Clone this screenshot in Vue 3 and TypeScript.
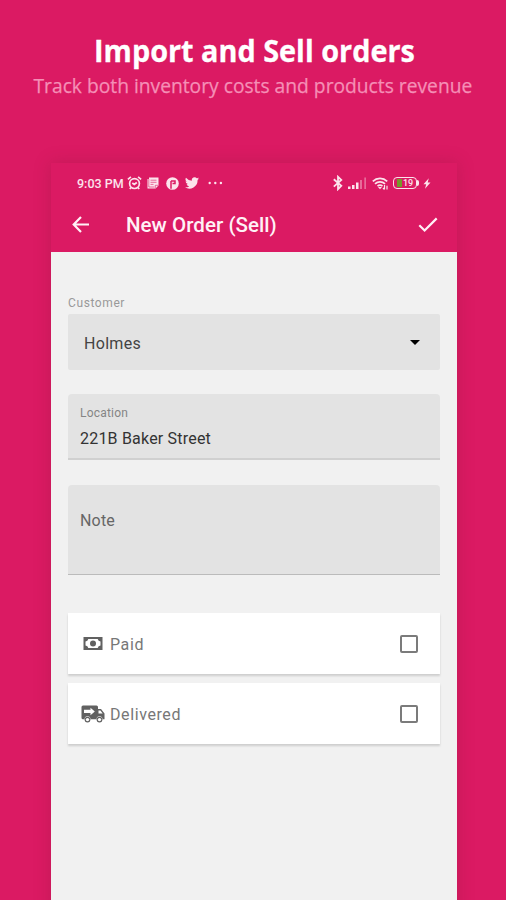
<script setup lang="ts">
import { ref } from 'vue'

const customer = ref('Holmes')
const location = ref('221B Baker Street')
const checks = ref([
  { id: 'paid', label: 'Paid', done: false },
  { id: 'delivered', label: 'Delivered', done: false },
])
</script>

<template>
  <main class="promo">
    <header class="headline">
      <h1><span>Import and Sell orders</span></h1>
      <p><span>Track both inventory costs and products revenue</span></p>
    </header>

    <section class="phone">
      <div class="status">
        <span class="time">9:03 PM</span>
        <svg class="alarm" width="15" height="14" viewBox="0 0 15 14" fill="none" stroke="currentColor" stroke-width="1.700">
          <circle cx="7.500" cy="7.600" r="4.900" />
          <path d="M.9 3.400 3.900.9M14.100 3.400 11.100.9M5.300 7l2 1.500 2.500-2M4 11.500 2.800 13M11 11.500l1.200 1.500" />
        </svg>
        <svg class="news" width="12" height="12" viewBox="0 0 12 12">
          <path fill="currentColor" d="M2 .5h9.500v8L8.500 11.500H.5V2H2z" />
          <path d="M3.500 3.200h6M3.500 5.300h6M3.500 7.400h3M1.800 2v8h5.500M8.300 11V8.300H11" fill="none" stroke="#db1a63" stroke-width=".6" />
        </svg>
        <svg class="badge" width="13" height="13" viewBox="0 0 13 13">
          <circle cx="6.500" cy="6.500" r="6.300" fill="currentColor" />
          <path d="M5 11.800V4M5 4h4v2.500H6.500" fill="none" stroke="#db1a63" stroke-width="1.500" />
        </svg>
        <svg class="bird" width="14" height="12" viewBox="0 0 24 20">
          <path fill="currentColor" d="M24 2.400a10 10 0 0 1-2.800.8A5 5 0 0 0 23.300.500a10 10 0 0 1-3.100 1.200 4.900 4.900 0 0 0-8.400 4.500A14 14 0 0 1 1.700 1a4.900 4.900 0 0 0 1.500 6.600A5 5 0 0 1 1 7a4.900 4.900 0 0 0 3.900 4.900 5 5 0 0 1-2.200.1 4.900 4.900 0 0 0 4.600 3.400A10 10 0 0 1 0 17.400 14 14 0 0 0 21.500 4.900 10 10 0 0 0 24 2.400z" />
        </svg>
        <svg class="dots" width="15" height="4" viewBox="0 0 15 4" fill="currentColor">
          <circle cx="1.700" cy="2" r="1.200" /><circle cx="7.300" cy="2" r="1.200" /><circle cx="12.900" cy="2" r="1.200" />
        </svg>
        <span class="space" />
        <svg class="bt" width="10" height="16" viewBox="0 0 10 16" fill="none" stroke="currentColor" stroke-width="1.800">
          <path d="m.8 4.300 7.500 6.600L5 14.200V1.800l3.300 3.100L.8 11.600" />
        </svg>
        <svg class="signal" width="19" height="12" viewBox="0 0 19 12" fill="currentColor">
          <path d="M0 9.500h2.500V12H0zM4 8h2.500v4H4zM8 5.500h2.500V12H8z" />
          <path d="M12 3h2v9h-2zM16.300.500h1.700V12h-1.700z" opacity=".4" />
        </svg>
        <svg class="wifi" width="17" height="13" viewBox="0 0 17 13" fill="none" stroke="currentColor" stroke-width="1.700">
          <path d="M.8 4.300a10.500 10.500 0 0 1 14.400 0M3 6.900a7.200 7.200 0 0 1 10 0M5.500 9.200a4 4 0 0 1 5 0" />
          <path d="m6 10 2 2.300L10 10z" fill="currentColor" stroke="none" />
          <path d="M12.500 8v4.300M11 11l1.500 1.500M15 12.500V8.800" stroke-width="1.200" />
        </svg>
        <span class="battery"><i class="level" /><b>19</b></span>
        <svg class="bolt" width="8" height="11" viewBox="0 0 8 11">
          <path fill="currentColor" d="M5.800.3.500 6.200h2.700L2 10.700l5.500-6.200H4.700z" />
        </svg>
      </div>

      <nav class="toolbar">
        <svg width="18" height="18" viewBox="0 0 18 18" fill="none" stroke="currentColor" stroke-width="2.200">
          <path d="M17 8.500H2M9 1 1.700 8.500 9 16" />
        </svg>
        <h2>New Order (Sell)</h2>
        <svg class="tick" width="20" height="16" viewBox="0 0 20 16" fill="none" stroke="currentColor" stroke-width="2.200">
          <path d="m1.300 8.200 5.300 5.300L18.700 1.400" />
        </svg>
      </nav>

      <div class="form">
        <span class="caption">Customer</span>
        <div class="select">
          <span>{{ customer }}</span>
          <svg width="10" height="5" viewBox="0 0 10 5"><path d="M0 0h10L5 5z" /></svg>
        </div>
        <div class="field">
          <span class="caption">Location</span>
          <span class="value">{{ location }}</span>
        </div>
        <div class="note">Note</div>

        <div v-for="item in checks" :key="item.id" class="card" @click="item.done = !item.done">
          <span class="icon">
            <svg v-if="item.id === 'paid'" width="20" height="13" viewBox="0 0 20 13">
              <path fill="#616161" fill-rule="evenodd" d="M.500 0h19v13H.500zM5.300 2A3.200 3.200 0 0 1 2.500 4.500v4A3.200 3.200 0 0 1 5.300 11h9.400a3.200 3.200 0 0 1 2.800-2.500v-4A3.200 3.200 0 0 1 14.700 2z" />
              <circle cx="10" cy="6.500" r="3" fill="#616161" />
            </svg>
            <svg v-else width="24" height="18" viewBox="0 0 24 18">
              <path fill="#616161" d="M2 .500h13.500A1.500 1.500 0 0 1 17 2v2h3l3.500 4.500v5.700h-2a3 3 0 0 0-6 0H9.500a3 3 0 0 0-6 0H2A1.500 1.500 0 0 1 .500 12.700V2A1.500 1.500 0 0 1 2 .500z" />
              <path fill="#fff" d="M3 4.800h6.500V2.800l4.300 3.700-4.300 3.700V7.900H3zM17.500 5.500h1.900l2.300 3h-4.200z" />
              <circle cx="6.500" cy="14.600" r="2.900" fill="#616161" /><circle cx="18.500" cy="14.600" r="2.900" fill="#616161" />
              <circle cx="6.500" cy="14.600" r="1.700" fill="#fff" /><circle cx="18.500" cy="14.600" r="1.700" fill="#fff" />
            </svg>
          </span>
          <span class="name">{{ item.label }}</span>
          <span class="box" :class="{ done: item.done }" />
        </div>
      </div>
    </section>
  </main>
</template>

<style>
body {
  margin: 0;
  background: #db1a63;
}
</style>

<style scoped>
.promo {
  box-sizing: border-box;
  width: 506px;
  height: 900px;
  overflow: hidden;
  background: #db1a63;
  font-family: Roboto, sans-serif;
}
.headline {
  height: 163px;
  box-sizing: border-box;
  padding-top: 30px;
  text-align: center;
  font-family: "Open Sans", "Noto Sans", sans-serif;
  white-space: nowrap;
}
h1 {
  margin: 0;
  font-size: 31px;
  line-height: 41px;
  font-weight: 700;
  color: #fff;
  -webkit-text-stroke: 0.3px #fff;
}
h1 span {
  display: inline-block;
  transform: translateX(1px) scaleX(0.93);
}
.headline p {
  margin: 0;
  font-size: 20.5px;
  line-height: 29px;
  color: #f58fb6;
  -webkit-text-stroke: 0.25px #f58fb6;
}
.headline p span {
  display: inline-block;
  transform: scaleX(0.938);
}
.phone {
  width: 406px;
  height: 760px;
  margin-left: 51px;
  background: #f1f1f1;
  box-shadow: 0 0 16px rgba(130, 25, 55, 0.28);
}
.status {
  height: 40px;
  box-sizing: border-box;
  padding: 0 26px;
  display: flex;
  align-items: center;
  background: #db1a63;
  color: #fce3ec;
}
.time {
  width: 50px;
  font-size: 12.5px;
  font-weight: 500;
  white-space: nowrap;
}
.news { margin-left: 5px; }
.badge { margin-left: 7px; }
.bird { margin-left: 6px; }
.dots { margin-left: 9px; }
.space { flex: 1; }
.bt { margin-right: 1px; }
.signal { margin-left: 4px; }
.wifi { margin-left: 5px; }
.battery {
  position: relative;
  display: flex;
  align-items: center;
  justify-content: center;
  box-sizing: border-box;
  width: 24px;
  height: 12px;
  margin: 0 6px 0 4px;
  border: 1.5px solid currentColor;
  border-radius: 4px;
  font-size: 9px;
  line-height: 8px;
}
.battery::after {
  content: "";
  position: absolute;
  right: -3px;
  top: 2px;
  width: 2px;
  height: 6px;
  border-radius: 0 2px 2px 0;
  background: currentColor;
}
.battery b {
  font-weight: 500;
}
.level {
  width: 5px;
  height: 8px;
  margin-right: 1px;
  background: #75992b;
}
.toolbar {
  height: 49px;
  box-sizing: border-box;
  display: flex;
  align-items: center;
  padding: 0 19px 5px 21px;
  background: #db1a63;
  color: #fff1f6;
}
h2 {
  flex: 1;
  margin: 0 0 0 36px;
  font-size: 20.5px;
  line-height: 24px;
  font-weight: 500;
  letter-spacing: 0.05px;
}
.form {
  display: flex;
  flex-direction: column;
  padding: 44px 17px 0;
}
.caption {
  font-size: 12px;
  line-height: 14px;
  color: #858585;
  letter-spacing: 0.2px;
}
.form > .caption {
  margin-bottom: 4px;
  color: #999;
  letter-spacing: 0.6px;
}
.select {
  height: 56px;
  box-sizing: border-box;
  display: flex;
  align-items: center;
  justify-content: space-between;
  padding: 0 20px 0 16px;
  border-radius: 2px;
  background: #e3e3e3;
  color: #444;
  font-size: 16px;
  letter-spacing: 0.3px;
}
.select span {
  padding-top: 2px;
}
.field {
  height: 66px;
  box-sizing: border-box;
  display: flex;
  flex-direction: column;
  margin-top: 24px;
  padding: 12px 12px 0;
  border-bottom: 2px solid #d0d0d0;
  border-radius: 4px 4px 0 0;
  background: #e3e3e3;
}
.value {
  margin-top: 9px;
  font-size: 16px;
  line-height: 20px;
  letter-spacing: 0.2px;
  color: #333;
}
.note {
  height: 90px;
  box-sizing: border-box;
  margin: 25px 0 38px;
  padding: 26px 12px;
  border-bottom: 1px solid #bbb;
  border-radius: 4px 4px 0 0;
  background: #e3e3e3;
  color: #666;
  font-size: 16px;
  line-height: 20px;
  letter-spacing: 0.2px;
}
.card {
  height: 61px;
  display: flex;
  align-items: center;
  margin-bottom: 9px;
  padding: 0 22px 0 12px;
  background: #fff;
  box-shadow: 0 2px 2px rgba(0, 0, 0, 0.15);
}
.icon {
  width: 25px;
  display: flex;
  justify-content: center;
}
.name {
  flex: 1;
  margin-left: 5px;
  padding-top: 1px;
  font-size: 16px;
  letter-spacing: 0.6px;
  color: #777;
}
.box {
  box-sizing: border-box;
  width: 18px;
  height: 18px;
  border: 2px solid #7b7b7b;
  border-radius: 2px;
}
.box.done {
  background: #db1a63;
}
</style>
